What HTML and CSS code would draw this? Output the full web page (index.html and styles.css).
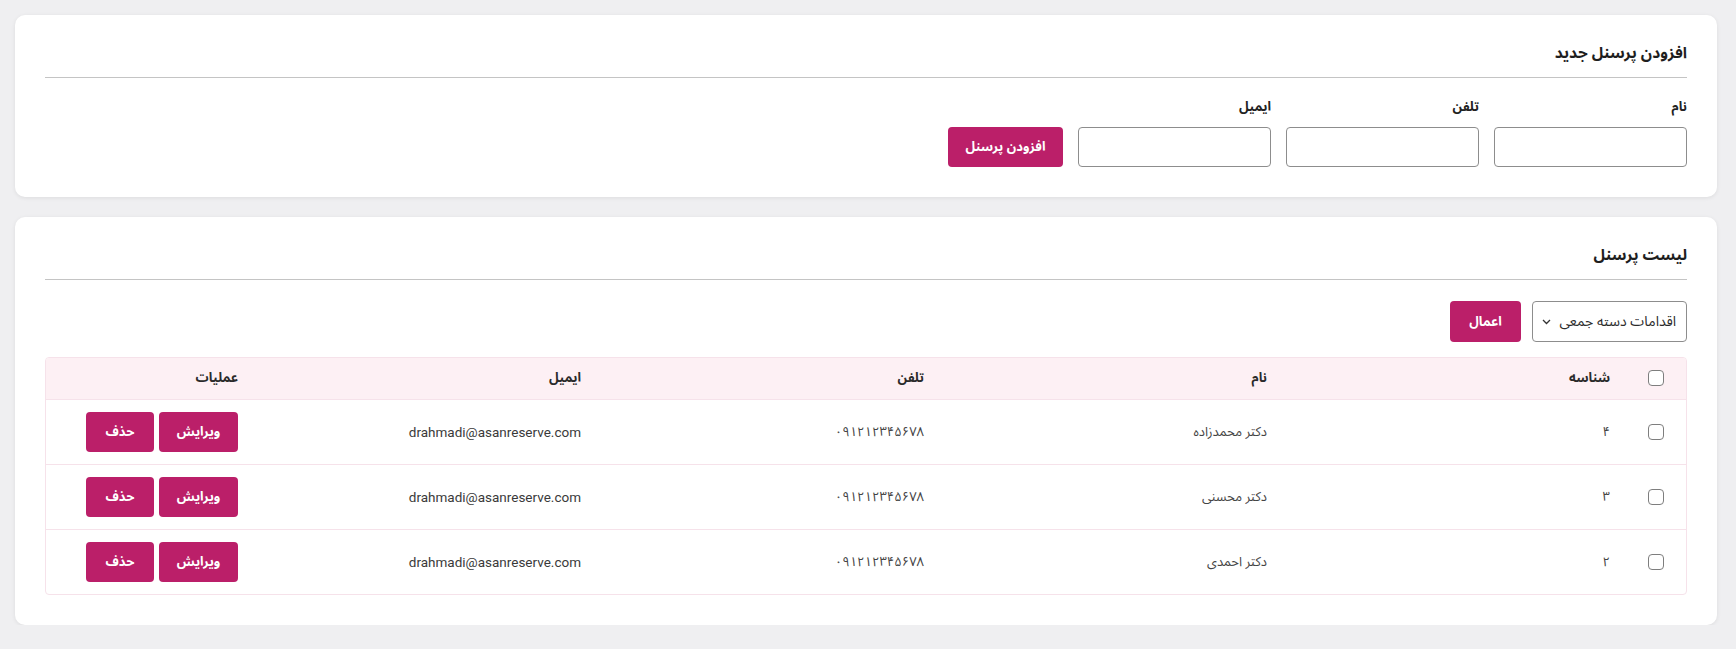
FILE: index.html
```html
<!DOCTYPE html>
<html lang="fa" dir="rtl">
<head>
	<meta charset="UTF-8">
	<title>مدیریت پرسنل</title>
	<link rel="stylesheet" href="styles.css">
</head>
<body>
	<div class="page">
		<!-- فرم افزودن -->
		<section class="card">
			<h2 class="card-title">افزودن پرسنل جدید</h2>
			<form class="add-form" onsubmit="return false;">
				<div class="field">
					<label>نام</label>
					<input type="text">
				</div>
				<div class="field">
					<label>تلفن</label>
					<input type="text">
				</div>
				<div class="field">
					<label>ایمیل</label>
					<input type="text">
				</div>
				<button class="btn btn-add">افزودن پرسنل</button>
			</form>
		</section>

		<!-- لیست پرسنل -->
		<section class="card">
			<h2 class="card-title">لیست پرسنل</h2>
			<div class="bulk">
				<div class="bulk-select">
					<span>اقدامات دسته جمعی</span>
					<svg width="9" height="6" viewBox="0 0 9 6"><path d="M1 1l3.5 3.5L8 1" fill="none" stroke="#333" stroke-width="1.3"/></svg>
				</div>
				<button class="btn btn-apply">اعمال</button>
			</div>
			<div class="table-wrap">
				<table class="staff">
					<colgroup>
						<col class="col-check">
						<col class="col-data">
						<col class="col-data">
						<col class="col-data">
						<col class="col-data">
						<col>
					</colgroup>
					<thead>
						<tr>
							<th><input type="checkbox" class="check"></th>
							<th>شناسه</th>
							<th>نام</th>
							<th>تلفن</th>
							<th>ایمیل</th>
							<th>عملیات</th>
						</tr>
					</thead>
					<tbody>
						<tr>
							<td><input type="checkbox" class="check"></td>
							<td>۴</td>
							<td>دکتر محمدزاده</td>
							<td class="num">۰۹۱۲۱۲۳۴۵۶۷۸</td>
							<td class="mail">drahmadi@asanreserve.com</td>
							<td>
								<div class="actions">
									<button class="btn btn-edit">ویرایش</button>
									<button class="btn btn-del">حذف</button>
								</div>
							</td>
						</tr>
						<tr>
							<td><input type="checkbox" class="check"></td>
							<td>۳</td>
							<td>دکتر محسنی</td>
							<td class="num">۰۹۱۲۱۲۳۴۵۶۷۸</td>
							<td class="mail">drahmadi@asanreserve.com</td>
							<td>
								<div class="actions">
									<button class="btn btn-edit">ویرایش</button>
									<button class="btn btn-del">حذف</button>
								</div>
							</td>
						</tr>
						<tr>
							<td><input type="checkbox" class="check"></td>
							<td>۲</td>
							<td>دکتر احمدی</td>
							<td class="num">۰۹۱۲۱۲۳۴۵۶۷۸</td>
							<td class="mail">drahmadi@asanreserve.com</td>
							<td>
								<div class="actions">
									<button class="btn btn-edit">ویرایش</button>
									<button class="btn btn-del">حذف</button>
								</div>
							</td>
						</tr>
					</tbody>
				</table>
			</div>
		</section>
	</div>
</body>
</html>
```

FILE: styles.css
```css
*{
	margin: 0;
	padding: 0;
	box-sizing: border-box;
}
body{
	background-color: #efeff1;
	font-family: "Noto Sans Arabic", "Vazirmatn", "DejaVu Sans", sans-serif;
	color: #333;
}
.page{
	display: flex;
	flex-direction: column;
	gap: 20px;
	padding: 15px 19px 0 15px;
}
.card{
	background-color: #fff;
	border-radius: 10px;
	box-shadow: 0 1px 4px rgba(0,0,0,.08);
	padding: 24px 30px 30px;
}
.card-title{
	font-size: 15.5px;
	font-weight: bold;
	line-height: 28px;
	color: #1e1e1e;
	padding-bottom: 10px;
	border-bottom: 1px solid #c4c4c4;
}

/* فرم افزودن */
.add-form{
	display: flex;
	align-items: flex-end;
	gap: 15px;
	margin-top: 19px;
}
.field{
	display: flex;
	flex-direction: column;
	gap: 10px;
	width: 193px;
}
.field label{
	font-size: 13px;
	font-weight: bold;
	line-height: 20px;
	color: #222;
}
.field input{
	height: 40px;
	border: 1px solid #8d8d8d;
	border-radius: 4px;
	outline: none;
}

.btn{
	border: 0;
	border-radius: 4px;
	background-color: #bb1f69;
	color: #fff;
	font-family: inherit;
	font-size: 13px;
	font-weight: bold;
	height: 40px;
	cursor: pointer;
}
.btn-add{
	width: 115px;
}

/* اقدامات دسته جمعی */
.bulk{
	display: flex;
	gap: 11px;
	margin-top: 21px;
}
.bulk-select{
	display: flex;
	align-items: center;
	justify-content: space-between;
	width: 155px;
	height: 41px;
	padding: 0 10px 0 9px;
	border: 1px solid #8d8d8d;
	border-radius: 4px;
	font-size: 14px;
	color: #2b2b2b;
}
.btn-apply{
	width: 71px;
	height: 41px;
}

/* جدول */
.table-wrap{
	margin-top: 15px;
	border: 1px solid #f6e2ea;
	border-radius: 4px;
	overflow: hidden;
}
.staff{
	width: 100%;
	border-collapse: collapse;
	table-layout: fixed;
}
.staff .col-check{
	width: 56px;
}
.staff .col-data{
	width: 343px;
}
.staff th,
.staff td{
	text-align: right;
	padding: 0 20px;
}
.staff th:first-child,
.staff td:first-child{
	padding: 0 22px 0 0;
}
.staff th{
	height: 41px;
	background-color: #fdf0f4;
	border-bottom: 1px solid #f6e2ea;
	font-size: 13px;
	font-weight: bold;
	color: #2a2a2a;
}
.staff td{
	height: 65px;
	font-size: 13px;
	color: #444;
	border-bottom: 1px solid #f6e2ea;
}
.staff tbody tr:last-child td{
	border-bottom: 0;
}
.staff td.mail{
	font-family: Roboto, "Liberation Sans", sans-serif;
	font-size: 13.5px;
	color: #3a3a3a;
}
.staff td.num{
	direction: ltr;
	text-align: right;
}
.check{
	-webkit-appearance: none;
	appearance: none;
	display: block;
	width: 16px;
	height: 16px;
	border: 1px solid #7e7e7e;
	border-radius: 4px;
	background: #fff;
}
.actions{
	display: flex;
	gap: 5px;
}
.btn-edit{
	width: 79px;
}
.btn-del{
	width: 68px;
}
```
